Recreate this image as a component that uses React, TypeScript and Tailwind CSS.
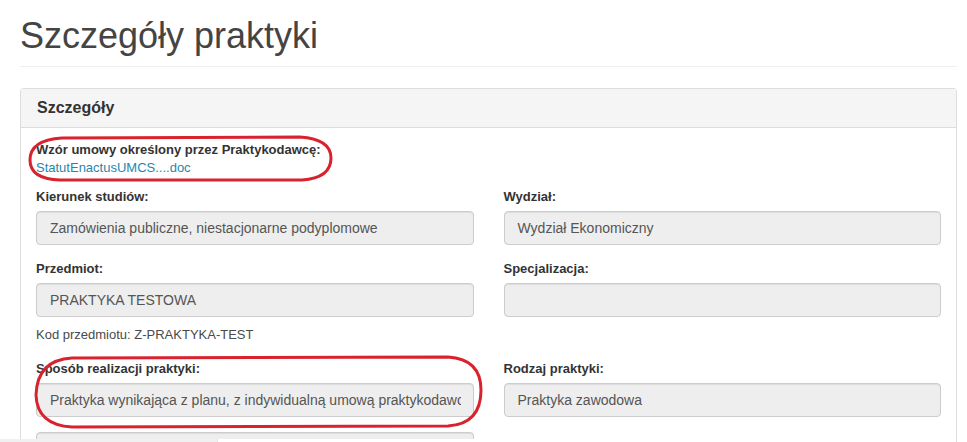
import React from "react";

type FieldProps = {
  label?: string;
  value?: string;
  help?: string;
};

function Field({ label, value, help }: FieldProps) {
  return (
    <div className="flex flex-col">
      {label && (
        <label className="mb-[4px] text-[13px] font-bold leading-[20px] text-[#333]">{label}</label>
      )}
      <div className="h-[34px] rounded-[4px] border border-[#ccc] bg-[#eee] px-[12px] text-[14px] leading-[32px] text-[#555] shadow-[inset_0_1px_1px_rgba(0,0,0,0.075)]">
        <div className="overflow-hidden whitespace-nowrap pl-px">{value}</div>
      </div>
      {help && <p className="mt-[8px] text-[13px] leading-[20px] text-[#4a4a4a]">{help}</p>}
    </div>
  );
}

export default function App() {
  return (
    <div
      className="relative h-[442px] overflow-hidden bg-white pl-[20px] pr-[10px]"
      style={{ fontFamily: '"Liberation Sans", Arial, sans-serif' }}
    >
      {/* Page header */}
      <div className="mt-[16px] border-b border-[#eee] pb-[10px]">
        <h1 className="text-[36px] font-normal leading-[40px] text-[#444]">Szczegóły praktyki</h1>
      </div>

      {/* Panel */}
      <div className="mt-[21px] rounded-t-[4px] border border-b-0 border-[#ddd]">
        <div className="border-b border-[#ddd] bg-[#f5f5f5] px-[16px] py-[10px] text-[16px] font-bold leading-[18px] text-[#333]">
          Szczegóły
        </div>
        <div className="px-[15px] pt-[13px]">
          <div className="flex flex-col text-[13px] leading-[18px]">
            <span className="font-bold text-[#333]">Wzór umowy określony przez Praktykodawcę:</span>
            <a className="text-[#1f88ad]">StatutEnactusUMCS....doc</a>
          </div>

          <div className="mt-[10px] grid grid-cols-2 gap-x-[30px] gap-y-[14px]">
            <Field label="Kierunek studiów:" value="Zamówienia publiczne, niestacjonarne podyplomowe" />
            <Field label="Wydział:" value="Wydział Ekonomiczny" />
            <Field label="Przedmiot:" value="PRAKTYKA TESTOWA" help="Kod przedmiotu: Z-PRAKTYKA-TEST" />
            <div className="self-start">
              <Field label="Specjalizacja:" value="" />
            </div>
            <Field
              label="Sposób realizacji praktyki:"
              value="Praktyka wynikająca z planu, z indywidualną umową praktykodawcy"
            />
            <Field label="Rodzaj praktyki:" value="Praktyka zawodowa" />
            <div className="mt-px">
              <Field value="" />
            </div>
          </div>
        </div>
      </div>

      {/* Red hand-drawn annotations */}
      <svg className="pointer-events-none absolute left-0 top-0" width="967" height="442" viewBox="0 0 967 442">
        <path
          d="M 62 138 L 300 137 Q 331 139 331 158 Q 331 178 302 180 L 60 180 Q 30 179 30 160 Q 30 140 62 138 Z"
          fill="none"
          stroke="#d8232f"
          strokeWidth="3"
        />
        <path
          d="M 72 358 L 448 357 Q 481 359 481 390 Q 481 424 448 426 L 72 427 Q 37 425 36 395 Q 37 360 72 358 Z"
          fill="none"
          stroke="#d8232f"
          strokeWidth="3"
        />
      </svg>

      {/* Bottom edge strip */}
      <div className="absolute bottom-0 left-0 h-[3px] w-[217px] bg-[#f0f0f0]" />
      <div className="absolute bottom-0 left-[217px] h-[3px] w-[485px] border-l border-[#e5e5e5] bg-white" />
    </div>
  );
}
